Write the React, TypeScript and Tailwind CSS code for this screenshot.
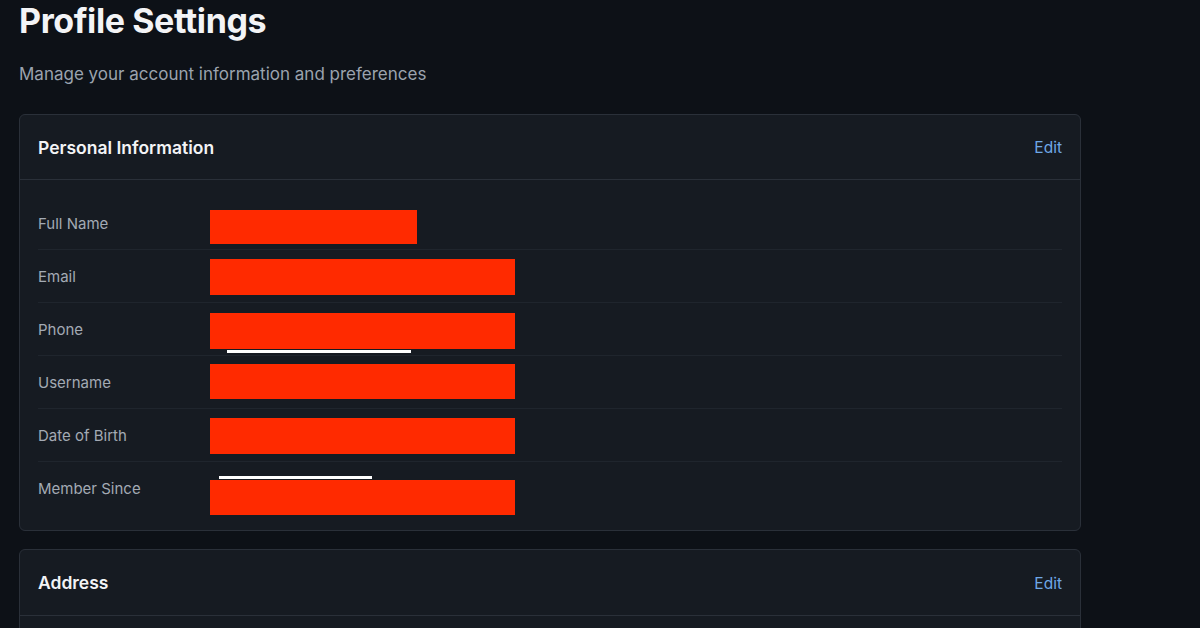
import React from "react";

const rows: { label: string; w: number; h: number; dy: number; bar?: { top: boolean; left: number; w: number } }[] = [
  { label: "Full Name", w: 207, h: 34, dy: 4 },
  { label: "Email", w: 305, h: 36, dy: 1 },
  { label: "Phone", w: 305, h: 36, dy: 2, bar: { top: false, left: 17, w: 184 } },
  { label: "Username", w: 305, h: 35, dy: -1 },
  { label: "Date of Birth", w: 305, h: 36, dy: 1 },
  { label: "Member Since", w: 305, h: 35, dy: 9, bar: { top: true, left: 9, w: 153 } },
];

export default function App() {
  return (
    <div
      className="w-[1200px] h-[628px] overflow-hidden bg-[#0d1117] pl-[19px]"
      style={{ fontFamily: "Inter, 'Noto Sans', sans-serif" }}
    >
      <h1 className="text-[34px] leading-[42px] font-bold text-[#f3f4f6] tracking-[-0.4px]">Profile Settings</h1>
      <p className="mt-[19px] text-[17px] leading-[26px] text-[#9ba3ae]">
        Manage your account information and preferences
      </p>

      <div className="mt-[27px] w-[1062px] rounded-[6px] border border-[#2a3039] bg-[#161b22]">
        <div className="flex h-[65px] items-center justify-between border-b border-[#2a3039] px-[18px] pt-[2px]">
          <span className="text-[17.5px] font-semibold text-[#f3f4f6]">Personal Information</span>
          <span className="text-[15.5px] text-[#6fa8e6]">Edit</span>
        </div>
        <div className="px-[18px] pt-[17px] pb-[15px]">
          {rows.map((r, i) => (
            <div
              key={r.label}
              className={`flex h-[53px] items-center ${i < rows.length - 1 ? "border-b border-[#1f252d]" : ""}`}
            >
              <span className="w-[172px] shrink-0 text-[15px] text-[#a3aab4] pt-[2px]">{r.label}</span>
              <div className="relative" style={{ top: r.dy }}>
                <div className="bg-[#ff2a00]" style={{ width: r.w, height: r.h }} />
                {r.bar && (
                  <div
                    className="absolute h-[3px] bg-white"
                    style={{
                      left: r.bar.left,
                      width: r.bar.w,
                      top: r.bar.top ? -4 : r.h + 1,
                    }}
                  />
                )}
              </div>
            </div>
          ))}
        </div>
      </div>

      <div className="mt-[18px] w-[1062px] rounded-[6px] border border-[#2a3039] bg-[#161b22]">
        <div className="flex h-[66px] items-center justify-between border-b border-[#2a3039] px-[18px] pt-[2px]">
          <span className="text-[17.5px] font-semibold text-[#f3f4f6]">Address</span>
          <span className="text-[15.5px] text-[#6fa8e6]">Edit</span>
        </div>
        <div className="h-[60px]" />
      </div>
    </div>
  );
}
